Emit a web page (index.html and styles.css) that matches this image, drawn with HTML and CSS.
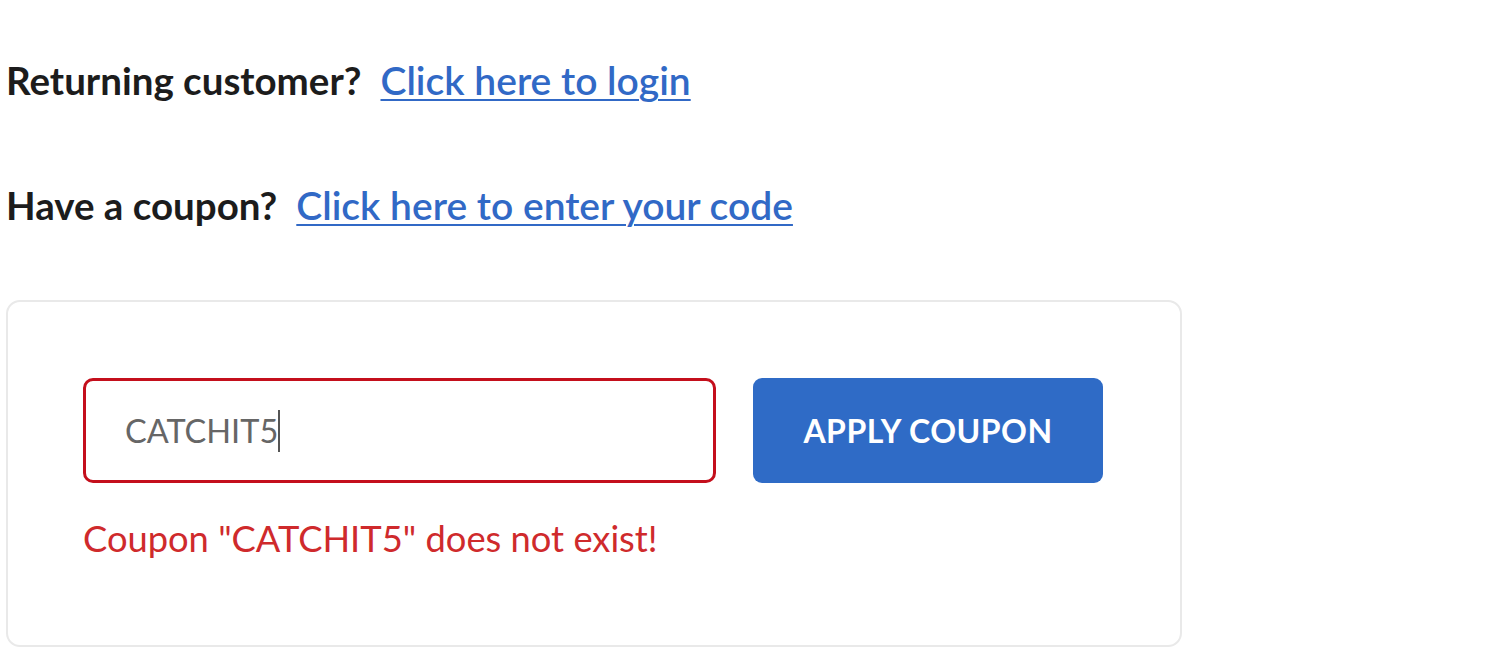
FILE: index.html
```html
<!DOCTYPE html>
<html lang="en">
<head>
<meta charset="utf-8">
<title>Checkout coupon</title>
<link rel="stylesheet" href="styles.css">
</head>
<body>
<main class="checkout">
  <p class="notice"><span class="label">Returning customer?</span><a href="#" class="link">Click here to login</a></p>
  <p class="notice"><span class="label">Have a coupon?</span><a href="#" class="link">Click here to enter your code</a></p>
  <form class="coupon-box">
    <div class="coupon-row">
      <div class="field">
        <div class="input">CATCHIT5<span class="caret"></span></div>
        <p class="error">Coupon "CATCHIT5" does not exist!</p>
      </div>
      <button type="button" class="apply">APPLY COUPON</button>
    </div>
  </form>
</main>
</body>
</html>
```
FILE: styles.css
```css
* { box-sizing: border-box; }
html, body { margin: 0; background: #ffffff; }
body {
  font-family: "Lato", "Noto Sans", sans-serif;
  color: #1c1c1c;
}
.checkout {
  padding: 60px 0 0 6px;
  width: 1182px;
}
.notice {
  margin: 0 0 84px 0;
  line-height: 41px;
  height: 41px;
  white-space: nowrap;
}
.label {
  font-size: 38.5px;
  font-weight: 700;
  margin-right: 19px;
}
.link {
  font-size: 39px;
  color: #3169c6;
  font-weight: 600;
  text-decoration: underline;
  text-decoration-thickness: 2px;
  text-underline-offset: 4px;
}
.coupon-box {
  margin-top: -10px;
  border: 2px solid #e9e9e9;
  border-radius: 14px;
  height: 347px;
  padding: 76px 0 0 75px;
}
.coupon-row {
  display: flex;
  gap: 37px;
  align-items: flex-start;
}
.field { width: 633px; }
.input {
  height: 105px;
  border: 3px solid #c40f1c;
  border-radius: 10px;
  padding-left: 39px;
  display: flex;
  align-items: center;
  font-size: 32.5px;
  color: #666666;
}
.caret {
  display: inline-block;
  width: 2px;
  height: 42px;
  background: #555;
  margin-left: 0;
}
.error {
  margin: 35px 0 0 0;
  font-size: 36.3px;
  color: #cf2a2c;
  line-height: 40px;
}
.apply {
  width: 350px;
  height: 105px;
  border: none;
  border-radius: 9px;
  background: #2f6bc6;
  color: #ffffff;
  font-family: "Lato", "Noto Sans", sans-serif;
  font-weight: 700;
  font-size: 32px;
  letter-spacing: 0.5px;
}
```
